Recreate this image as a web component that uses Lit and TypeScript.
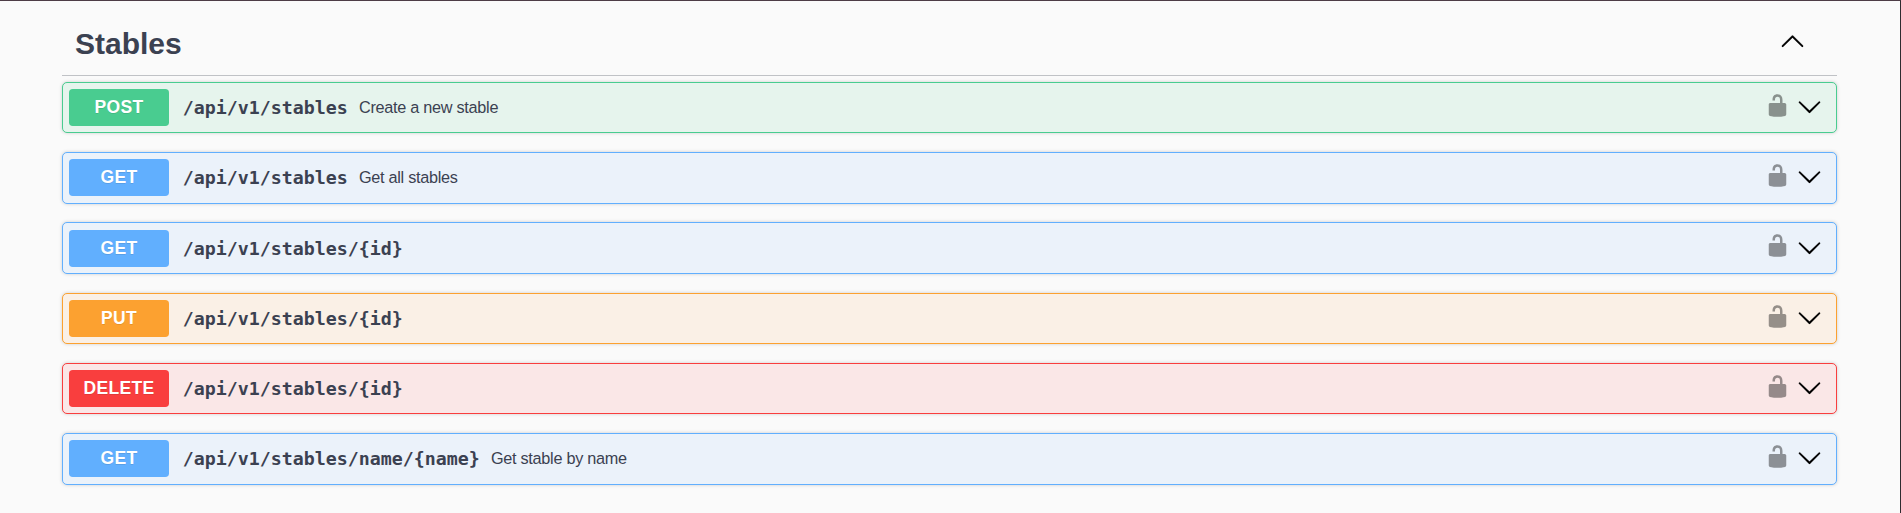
import { LitElement, html, css } from "lit";
import { customElement, property } from "lit/decorators.js";

const UP =
  "M17.418 14.908c.272.268.709.268.979 0s.271-.701 0-.969l-7.908-7.83c-.27-.268-.707-.268-.979 0l-7.908 7.83c-.27.268-.27.701 0 .969.271.268.709.268.979 0L10 7.767l7.418 7.141z";
const DOWN =
  "M17.418 6.109c.272-.268.709-.268.979 0s.271.701 0 .969l-7.908 7.83c-.27.268-.707.268-.979 0l-7.908-7.83c-.27-.268-.27-.701 0-.969.271-.268.709-.268.979 0L10 13.25l7.418-7.141z";
const UNLOCKED =
  "M15.8 8H14V5.6C14 2.703 12.665 1 10 1 7.334 1 6 2.703 6 5.6V6h2v-.801C8 3.754 8.797 3 10 3c1.203 0 2 .754 2 2.199V8H4c-.553 0-1 .646-1 1.199V17c0 .549.428 1.139.951 1.307l1.197.387C5.672 18.861 6.55 19 7.1 19h5.8c.549 0 1.428-.139 1.951-.307l1.196-.387c.524-.167.953-.757.953-1.306V9.199C17 8.646 16.352 8 15.8 8z";

@customElement("api-operation")
export class ApiOperation extends LitElement {
  @property() method = "GET";
  @property() path = "";
  @property() summary = "";

  static styles = css`
    :host { display: block; margin-bottom: 18.75px; }
    .row {
      --c: #61affe;
      --bg: #ebf2fa;
      box-sizing: border-box;
      height: 51.5px;
      border: 1px solid var(--c);
      border-radius: 5px;
      background: var(--bg);
      box-shadow: 0 0 3.75px rgba(0, 0, 0, 0.19);
      display: flex;
      align-items: flex-start;
      padding: 6.25px 12.75px 0 6px;
    }
    .post { --c: #49cc90; --bg: #e6f4ed; }
    .put { --c: #fca130; --bg: #faf0e6; }
    .delete { --c: #f93e3e; --bg: #fae7e7; }
    .method {
      width: 100px;
      height: 37px;
      line-height: 37px;
      border-radius: 3.75px;
      background: var(--c);
      color: #fff;
      font-size: 17.5px;
      font-weight: 700;
      letter-spacing: 0.3px;
      text-align: center;
      text-shadow: 0 1px 0 rgba(0, 0, 0, 0.1);
    }
    .path {
      margin-left: 13.8px;
      font: 700 18.28px/37px "DejaVu Sans Mono", monospace;
      white-space: nowrap;
    }
    .summary {
      flex: 1;
      margin-left: 11.2px;
      font-size: 16.25px;
      letter-spacing: -0.28px;
      line-height: 37px;
    }
    svg { width: 25px; height: 25px; display: block; flex: none; fill: #000; }
    .lock { opacity: 0.4; margin: 3.95px 7px 0 0; }
    .arrow { margin: 5.05px 1px 0 0; stroke: #000; stroke-width: 0.15; }
  `;

  render() {
    return html`<div class="row ${this.method.toLowerCase()}">
      <span class="method">${this.method}</span>
      <span class="path">${this.path}</span>
      <span class="summary">${this.summary}</span>
      <svg class="lock" viewBox="0 0 20 20"><path d=${UNLOCKED}></path></svg>
      <svg class="arrow" viewBox="0 0 20 20"><path d=${DOWN}></path></svg>
    </div>`;
  }
}

const OPERATIONS = [
  ["POST", "/api/v1/stables", "Create a new stable"],
  ["GET", "/api/v1/stables", "Get all stables"],
  ["GET", "/api/v1/stables/{id}", ""],
  ["PUT", "/api/v1/stables/{id}", ""],
  ["DELETE", "/api/v1/stables/{id}", ""],
  ["GET", "/api/v1/stables/name/{name}", "Get stable by name"],
];

@customElement("app-root")
export class AppRoot extends LitElement {
  static styles = css`
    :host {
      display: block;
      box-sizing: border-box;
      height: 513px;
      overflow: hidden;
      border-top: 1px solid #4d3c46;
      border-right: 1px solid #2e2c30;
      background: #fafafa;
      color: #3b4151;
      font-family: "Liberation Sans", Arial, sans-serif;
      padding: 0 63px 0 62px;
    }
    .head {
      box-sizing: border-box;
      height: 75px;
      display: flex;
      align-items: flex-start;
      justify-content: space-between;
      border-bottom: 1px solid rgba(59, 65, 81, 0.3);
      padding: 0 32px 0 13px;
      margin-bottom: 5.8px;
    }
    h3 { margin: 25px 0 0; font-size: 30px; line-height: 35px; font-weight: 700; }
    svg { width: 25px; height: 25px; margin-top: 27px; fill: #000; stroke: #000; stroke-width: 0.15; }
  `;

  render() {
    return html`
      <div class="head">
        <h3>Stables</h3>
        <svg viewBox="0 0 20 20"><path d=${UP}></path></svg>
      </div>
      ${OPERATIONS.map(
        ([m, p, s]) => html`<api-operation .method=${m} .path=${p} .summary=${s}></api-operation>`
      )}
    `;
  }
}
